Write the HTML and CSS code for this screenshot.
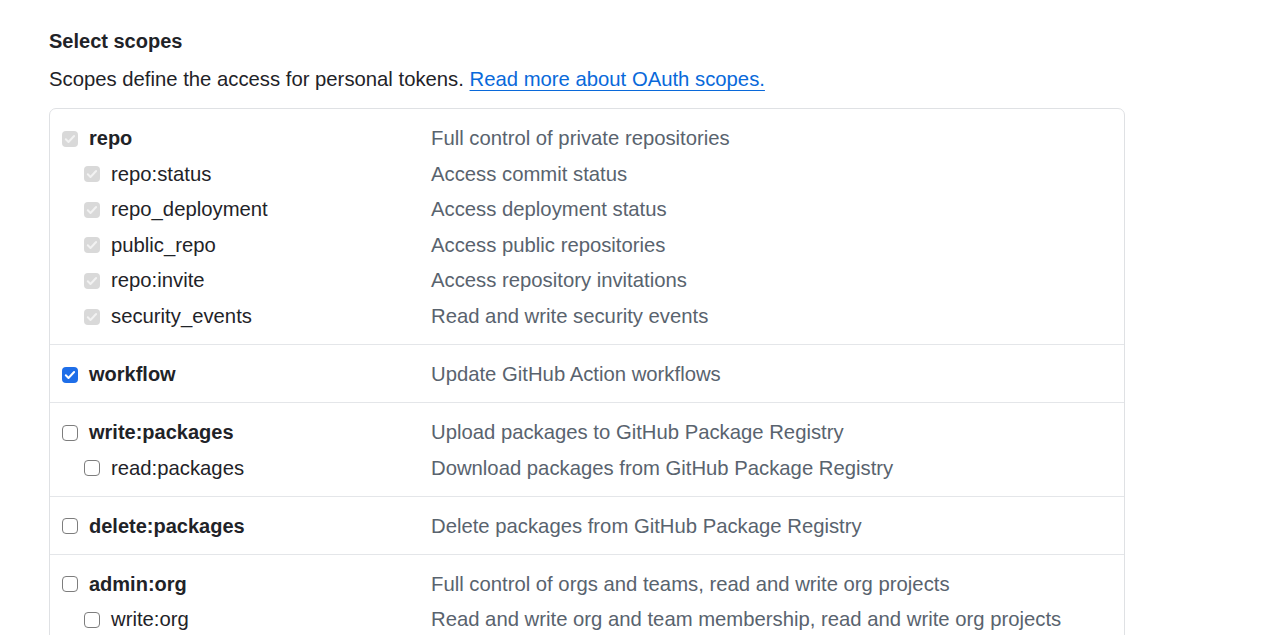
FILE: index.html
```html
<!DOCTYPE html>
<html lang="en">
<head>
    <meta charset="UTF-8">
    <meta name="viewport" content="width=device-width, initial-scale=1.0">
    <title>Select scopes</title>
    <link rel="stylesheet" href="styles.css">
</head>
<body>
    <div class="page">
        <h2 class="title">Select scopes</h2>
        <p class="note">Scopes define the access for personal tokens. <a href="#">Read more about OAuth scopes.</a></p>

        <div class="scopes">
            <div class="group">
                <div class="row">
                    <label class="name main"><span class="box disabled"><svg viewBox="0 0 16 16"><path d="M3.8 8.3l2.7 2.7 5.6-6"/></svg></span>repo</label>
                    <span class="desc">Full control of private repositories</span>
                </div>
                <div class="row">
                    <label class="name sub"><span class="box disabled"><svg viewBox="0 0 16 16"><path d="M3.8 8.3l2.7 2.7 5.6-6"/></svg></span>repo:status</label>
                    <span class="desc">Access commit status</span>
                </div>
                <div class="row">
                    <label class="name sub"><span class="box disabled"><svg viewBox="0 0 16 16"><path d="M3.8 8.3l2.7 2.7 5.6-6"/></svg></span>repo_deployment</label>
                    <span class="desc">Access deployment status</span>
                </div>
                <div class="row">
                    <label class="name sub"><span class="box disabled"><svg viewBox="0 0 16 16"><path d="M3.8 8.3l2.7 2.7 5.6-6"/></svg></span>public_repo</label>
                    <span class="desc">Access public repositories</span>
                </div>
                <div class="row">
                    <label class="name sub"><span class="box disabled"><svg viewBox="0 0 16 16"><path d="M3.8 8.3l2.7 2.7 5.6-6"/></svg></span>repo:invite</label>
                    <span class="desc">Access repository invitations</span>
                </div>
                <div class="row">
                    <label class="name sub"><span class="box disabled"><svg viewBox="0 0 16 16"><path d="M3.8 8.3l2.7 2.7 5.6-6"/></svg></span>security_events</label>
                    <span class="desc">Read and write security events</span>
                </div>
            </div>

            <div class="group">
                <div class="row">
                    <label class="name main"><span class="box checked"><svg viewBox="0 0 16 16"><path d="M3.8 8.3l2.7 2.7 5.6-6"/></svg></span>workflow</label>
                    <span class="desc">Update GitHub Action workflows</span>
                </div>
            </div>

            <div class="group">
                <div class="row">
                    <label class="name main"><span class="box"></span>write:packages</label>
                    <span class="desc">Upload packages to GitHub Package Registry</span>
                </div>
                <div class="row">
                    <label class="name sub"><span class="box"></span>read:packages</label>
                    <span class="desc">Download packages from GitHub Package Registry</span>
                </div>
            </div>

            <div class="group">
                <div class="row">
                    <label class="name main"><span class="box"></span>delete:packages</label>
                    <span class="desc">Delete packages from GitHub Package Registry</span>
                </div>
            </div>

            <div class="group">
                <div class="row">
                    <label class="name main"><span class="box"></span>admin:org</label>
                    <span class="desc">Full control of orgs and teams, read and write org projects</span>
                </div>
                <div class="row">
                    <label class="name sub"><span class="box"></span>write:org</label>
                    <span class="desc">Read and write org and team membership, read and write org projects</span>
                </div>
                <div class="row">
                    <label class="name sub"><span class="box"></span>read:org</label>
                    <span class="desc">Read org and team membership, read org projects</span>
                </div>
            </div>
        </div>
    </div>
</body>
</html>
```

FILE: styles.css
```css
html {
    overflow: hidden;
}
body {
    margin: 0;
    background-color: #fff;
    color: #1f2328;
    font-family: "Liberation Sans", Arial, sans-serif;
    font-size: 20.3px;
}
.page {
    padding: 26px 0 0 49px;
    width: 1076px;
}
.title {
    margin: 0;
    font-size: 20px;
    line-height: 30px;
    font-weight: bold;
}
.note {
    margin: 8px 0 14px;
    line-height: 30px;
}
.note a {
    color: #0969da;
    text-decoration: underline;
    text-underline-offset: 4px;
    text-decoration-thickness: 1px;
}
.scopes {
    border: 1px solid #dfe1e4;
    border-radius: 7px;
}
.group {
    padding: 11.8px 0 9.6px;
}
.group + .group {
    border-top: 1px solid #e4e6e9;
}
.row {
    display: grid;
    grid-template-columns: 381px 1fr;
    align-items: center;
    height: 35.6px;
}
.name {
    display: flex;
    align-items: center;
    gap: 11px;
}
.main {
    padding-left: 12px;
    font-size: 20px;
    font-weight: bold;
}
.sub {
    padding-left: 34px;
}
.desc {
    color: #59636e;
}
.box {
    width: 16px;
    height: 16px;
    box-sizing: border-box;
    border: 1px solid #7d7d7d;
    border-radius: 4px;
    background-color: #fff;
    display: flex;
    flex-shrink: 0;
}
.box svg {
    width: 16px;
    height: 16px;
    fill: none;
    stroke-width: 2;
    stroke-linecap: round;
    stroke-linejoin: round;
}
.box.disabled {
    border: none;
    background-color: #d9d9d9;
}
.box.disabled svg {
    stroke: #f2f2f2;
}
.box.checked {
    border: none;
    background-color: #1e6ee8;
}
.box.checked svg {
    stroke: #fff;
}
```
